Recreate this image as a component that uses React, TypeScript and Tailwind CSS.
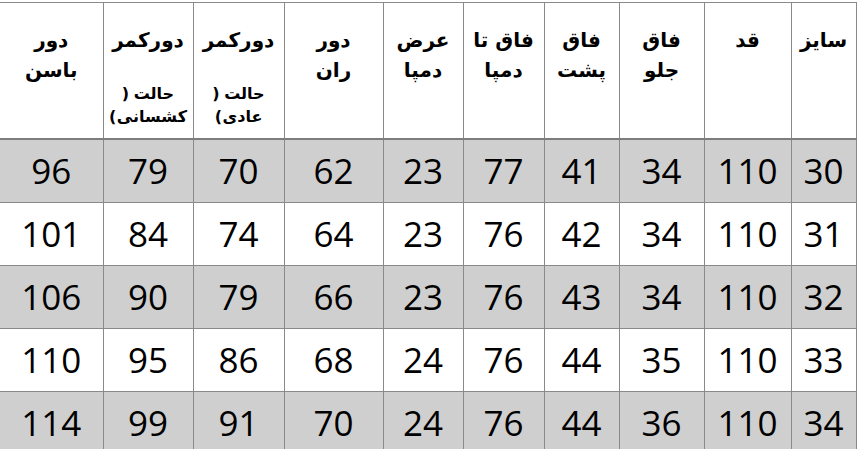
import React from 'react';

interface Column {
  title: string[];
  note?: string;
  width: string;
}

const columns: Column[] = [
  { title: ['سایز'], width: 'w-[65px]' },
  { title: ['قد'], width: 'w-[87px]' },
  { title: ['فاق', 'جلو'], width: 'w-[85px]' },
  { title: ['فاق', 'پشت'], width: 'w-[75px]' },
  { title: ['فاق تا', 'دمپا'], width: 'w-[81px]' },
  { title: ['عرض', 'دمپا'], width: 'w-[80px]' },
  { title: ['دور', 'ران'], width: 'w-[99px]' },
  { title: ['دورکمر'], note: 'عادی', width: 'w-[91px]' },
  { title: ['دورکمر'], note: 'کشسانی', width: 'w-[90px]' },
  { title: ['دور', 'باسن'], width: 'w-[103px]' },
];

const rows: number[][] = [
  [30, 110, 34, 41, 77, 23, 62, 70, 79, 96],
  [31, 110, 34, 42, 76, 23, 64, 74, 84, 101],
  [32, 110, 34, 43, 76, 23, 66, 79, 90, 106],
  [33, 110, 35, 44, 76, 24, 68, 86, 95, 110],
  [34, 110, 36, 44, 76, 24, 70, 91, 99, 114],
];

export default function App() {
  return (
    <div className="w-[858px] h-[449px] overflow-hidden bg-white pt-[2px]">
      <table dir="rtl" className="w-[856px] table-fixed border-collapse">
        <colgroup>
          {columns.map((c, i) => (
            <col key={i} className={c.width} />
          ))}
        </colgroup>
        <thead>
          <tr className="border-b-2 border-[#7d7d7d]">
            {columns.map((c, i) => (
              <th
                key={i}
                className="align-top border-t border-x border-[#8a8a8a] last:border-l-0 p-0 text-center font-bold text-black font-['DejaVu_Sans',sans-serif]"
              >
                <div className="h-[135px] overflow-hidden pt-[22px] whitespace-nowrap">
                  <div className="text-[20px] leading-[30px] tracking-[-0.5px]">
                    {c.title.map((t, k) => (
                      <div key={k}>{t}</div>
                    ))}
                  </div>
                  {c.note && (
                    <div className="mt-[27px] text-[16px] leading-[23px] tracking-[-0.5px]">
                      {/* parens placed by hand, the source text has them broken */}
                      <div dir="ltr" className="flex justify-center gap-[5px]">
                        <span>)</span>
                        <span dir="rtl">حالت</span>
                      </div>
                      <div dir="ltr" className="flex justify-center gap-[1px]">
                        <span>(</span>
                        <span dir="rtl">{c.note}</span>
                      </div>
                    </div>
                  )}
                </div>
              </th>
            ))}
          </tr>
        </thead>
        <tbody>
          {rows.map((r, ri) => (
            <tr key={ri} className={`h-[63px] ${ri % 2 === 0 ? 'bg-[#cfcfcf]' : 'bg-white'}`}>
              {r.map((v, ci) => (
                <td
                  key={ci}
                  className="border border-[#8a8a8a] last:border-l-0 p-0 text-center align-middle text-[35px] leading-none text-black font-['Open_Sans',sans-serif]"
                >
                  {v}
                </td>
              ))}
            </tr>
          ))}
        </tbody>
      </table>
    </div>
  );
}
